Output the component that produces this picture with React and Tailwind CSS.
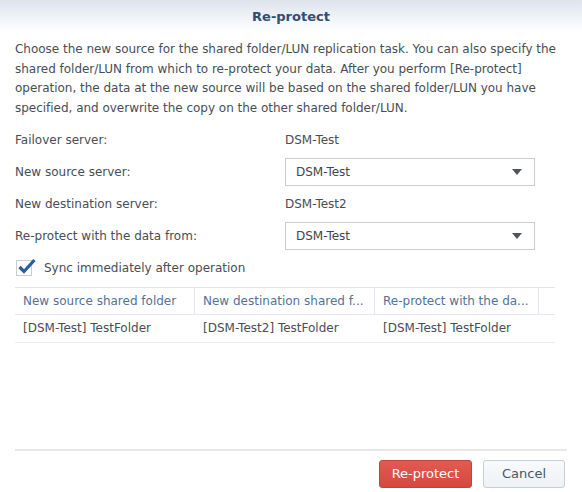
export default function App() {
  const font = { fontFamily: '"DejaVu Sans", Verdana, sans-serif' };
  const Select = ({ value }) => (
    <div className="w-[250px] h-[28px] border border-[#c9cdd2] bg-white flex items-center justify-between pl-[10px] pr-[12px]">
      <span className="text-[#40464d]">{value}</span>
      <svg width="10" height="6" viewBox="0 0 10 6"><path d="M0 0 L10 0 L5 6 Z" fill="#50565c" /></svg>
    </div>
  );
  return (
    <div className="w-[582px] h-[492px] bg-white flex flex-col text-[12px] text-[#474e56]" style={font}>
      <div className="h-[32px] shrink-0 bg-gradient-to-b from-[#dde4ee] to-white flex items-center justify-center pt-[1px]">
        <span className="text-[13px] font-bold text-[#2f4e72]">Re-protect</span>
      </div>
      <div className="flex-1 px-[15px]">
        <p className="mt-[8px] leading-[19.7px] tracking-[-0.02px]">
          Choose the new source for the shared folder/LUN replication task. You can also specify the shared folder/LUN from which to re-protect your data. After you perform [Re-protect] operation, the data at the new source will be based on the shared folder/LUN you have specified, and overwrite the copy on the other shared folder/LUN.
        </p>
        <div className="mt-[5px] flex flex-col">
          <div className="h-[32px] flex items-center">
            <div className="w-[270px]">Failover server:</div>
            <div>DSM-Test</div>
          </div>
          <div className="h-[32px] flex items-center">
            <div className="w-[270px]">New source server:</div>
            <Select value="DSM-Test" />
          </div>
          <div className="h-[32px] flex items-center">
            <div className="w-[270px]">New destination server:</div>
            <div>DSM-Test2</div>
          </div>
          <div className="h-[32px] flex items-center">
            <div className="w-[270px]">Re-protect with the data from:</div>
            <Select value="DSM-Test" />
          </div>
          <div className="h-[32px] flex items-center">
            <div className="relative w-[16px] h-[16px] ml-[1px] border border-[#c9cdd2] bg-white">
              <svg width="20" height="18" viewBox="0 0 20 18" className="absolute left-[0px] top-[-4px]">
                <path d="M2.5 10 L7 14.5 L17.5 3" fill="none" stroke="#2a5d9c" strokeWidth="3.2" strokeLinejoin="miter" />
              </svg>
            </div>
            <span className="ml-[12px]">Sync immediately after operation</span>
          </div>
        </div>
        <div className="mt-[3px] w-[540px] border-t border-[#dfe6ee]">
          <div className="flex h-[27px] border-b border-[#e3e8ee] text-[#53729a]">
            <div className="w-[180px] px-[8px] flex items-center border-r border-[#e3e8ee] whitespace-nowrap overflow-hidden">New source shared folder</div>
            <div className="w-[180px] px-[8px] flex items-center border-r border-[#e3e8ee] whitespace-nowrap overflow-hidden">New destination shared f...</div>
            <div className="w-[164px] px-[8px] flex items-center border-r border-[#e3e8ee] whitespace-nowrap overflow-hidden">Re-protect with the da...</div>
            <div className="flex-1"></div>
          </div>
          <div className="flex h-[28px] border-b border-[#e9edf1]">
            <div className="w-[180px] px-[8px] flex items-center whitespace-nowrap">[DSM-Test] TestFolder</div>
            <div className="w-[180px] px-[8px] flex items-center whitespace-nowrap">[DSM-Test2] TestFolder</div>
            <div className="w-[164px] px-[8px] flex items-center whitespace-nowrap">[DSM-Test] TestFolder</div>
            <div className="flex-1"></div>
          </div>
        </div>
      </div>
      <div className="mx-[15px] border-t-2 border-[#e8e8e8] pt-[9px] pb-[4px] flex justify-end gap-[11px] pr-[2px]">
        <button className="w-[93px] h-[28px] rounded-[3px] border border-[#c1443c] bg-gradient-to-b from-[#e25a50] to-[#d6483f] text-white text-[13px]">Re-protect</button>
        <button className="w-[82px] h-[28px] rounded-[3px] border border-[#c7cfd8] bg-gradient-to-b from-[#f8fafc] to-[#eef2f6] text-[#4a5562] text-[13px]">Cancel</button>
      </div>
    </div>
  );
}
